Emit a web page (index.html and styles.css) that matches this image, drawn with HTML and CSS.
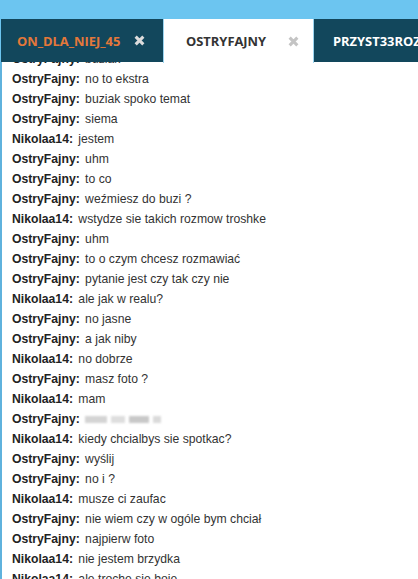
FILE: index.html
```html
<!DOCTYPE html>
<html lang="pl">
<head>
  <meta charset="UTF-8">
  <title>Czat</title>
  <link rel="stylesheet" href="styles.css">
</head>
<body>
  <div class="topbar"></div>

  <div class="tabs">
    <div class="tab">
      <span class="tab-name nick-orange">ON_DLA_NIEJ_45</span>
      <svg class="close" viewBox="0 0 10 10"><path d="M1.5 1.5 L8.5 8.5 M8.5 1.5 L1.5 8.5"/></svg>
    </div>
    <div class="tab active">
      <span class="tab-name">OSTRYFAJNY</span>
      <svg class="close" viewBox="0 0 10 10"><path d="M1.5 1.5 L8.5 8.5 M8.5 1.5 L1.5 8.5"/></svg>
    </div>
    <div class="tab last">
      <span class="tab-name">PRZYST33ROZ</span>
    </div>
  </div>

  <div class="chat">
    <ul class="messages">
      <li><b>OstryFajny:</b> buziak</li>
      <li><b>OstryFajny:</b> no to ekstra</li>
      <li><b>OstryFajny:</b> buziak spoko temat</li>
      <li><b>OstryFajny:</b> siema</li>
      <li><b>Nikolaa14:</b> jestem</li>
      <li><b>OstryFajny:</b> uhm</li>
      <li><b>OstryFajny:</b> to co</li>
      <li><b>OstryFajny:</b> weźmiesz do buzi ?</li>
      <li><b>Nikolaa14:</b> wstydze sie takich rozmow troshke</li>
      <li><b>OstryFajny:</b> uhm</li>
      <li><b>OstryFajny:</b> to o czym chcesz rozmawiać</li>
      <li><b>OstryFajny:</b> pytanie jest czy tak czy nie</li>
      <li><b>Nikolaa14:</b> ale jak w realu?</li>
      <li><b>OstryFajny:</b> no jasne</li>
      <li><b>OstryFajny:</b> a jak niby</li>
      <li><b>Nikolaa14:</b> no dobrze</li>
      <li><b>OstryFajny:</b> masz foto ?</li>
      <li><b>Nikolaa14:</b> mam</li>
      <li><b>OstryFajny:</b> <span class="blurred"><i></i><i class="w2"></i><i class="w3"></i><i class="w4"></i></span></li>
      <li><b>Nikolaa14:</b> kiedy chcialbys sie spotkac?</li>
      <li><b>OstryFajny:</b> wyślij</li>
      <li><b>OstryFajny:</b> no i ?</li>
      <li><b>Nikolaa14:</b> musze ci zaufac</li>
      <li><b>OstryFajny:</b> nie wiem czy w ogóle bym chciał</li>
      <li><b>OstryFajny:</b> najpierw foto</li>
      <li><b>Nikolaa14:</b> nie jestem brzydka</li>
      <li><b>Nikolaa14:</b> ale troche sie boje</li>
    </ul>
  </div>
</body>
</html>
```

FILE: styles.css
```css
body {
  margin: 0;
  width: 418px;
  height: 579px;
  overflow: hidden;
  background-color: #fff;
  font-family: 'Liberation Sans', Arial, sans-serif;
}

.topbar {
  height: 19px;
  background-color: #6cc5f0;
}

/* pasek z zakladkami rozmow */
.tabs {
  display: flex;
  height: 43px;
  background-color: #6cc5f0;
}

.tab {
  display: flex;
  align-items: center;
  box-sizing: border-box;
  background-color: #12475c;
  font-family: 'Open Sans', sans-serif;
  font-weight: 700;
  font-size: 12.9px;
  white-space: nowrap;
  overflow: hidden;
}

.tab:first-child {
  width: 162px;
  margin-left: 1px;
  padding-left: 16px;
}

.tab.active {
  width: 151px;
  padding-left: 22px;
  background-color: #fff;
  border-left: 1px solid #9bd4ef;
  border-right: 1px solid #9bd4ef;
  color: #333;
  height: 44px;
}

.tab.last {
  flex: 1;
  padding-left: 19px;
  color: #fff;
}

.nick-orange {
  color: #e4783a;
}

.close {
  width: 11px;
  height: 11px;
  margin-left: auto;
  stroke: #dcdcdc;
  stroke-width: 2.8;
  fill: none;
}

.tab:first-child .close {
  margin-right: 18px;
}

.tab.active .close {
  stroke: #c4c4c4;
  margin-right: 14px;
}

/* okno rozmowy */
.chat {
  height: 517px;
  overflow: hidden;
  border-left: 2px solid #5fb2dd;
}

.messages {
  list-style: none;
  margin: -13px 0 0 0;
  padding: 0 0 0 10px;
}

.messages li {
  height: 20px;
  line-height: 20px;
  font-size: 12.2px;
  color: #333;
  white-space: nowrap;
}

.messages b {
  color: #222;
  margin-right: 2px;
}

.blurred {
  display: inline-flex;
  gap: 4px;
  vertical-align: middle;
  filter: blur(1px);
}

.blurred i {
  display: block;
  width: 22px;
  height: 7px;
  background-color: #d4d4d4;
}

.blurred .w2 {
  width: 14px;
  background-color: #dedede;
}

.blurred .w3 {
  width: 20px;
  background-color: #c8c8c8;
}

.blurred .w4 {
  width: 8px;
  background-color: #dadada;
}
```
